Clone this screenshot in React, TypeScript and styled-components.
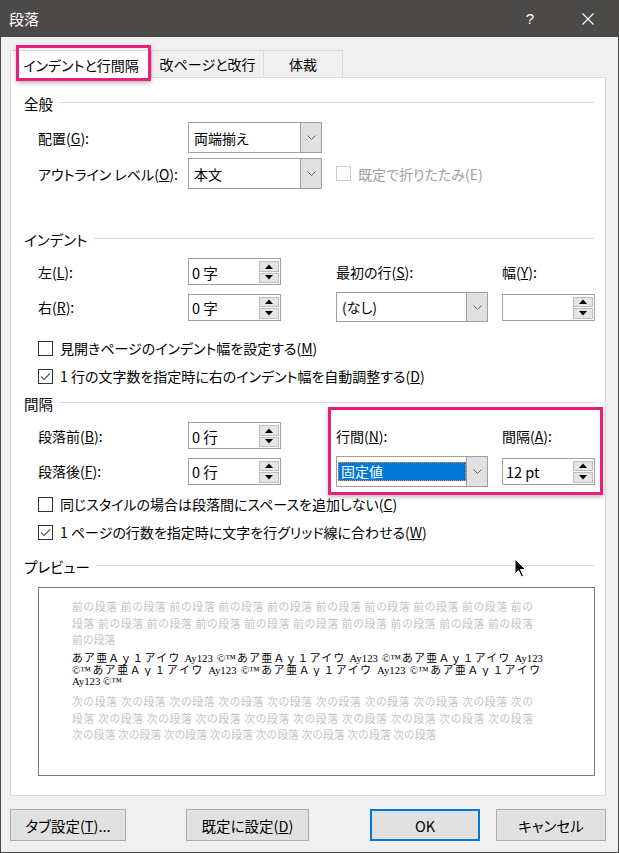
import React from "react";
import styled, { createGlobalStyle } from "styled-components";

const FONT = `"Noto Sans CJK JP", "Noto Sans", sans-serif`;

const GlobalStyle = createGlobalStyle`
  html, body { margin: 0; padding: 0; background: #f0f0f0; }
  body { font-family: ${FONT}; }
  * { box-sizing: border-box; }
`;

const Window = styled.div`
  position: relative;
  width: 619px;
  height: 853px;
  display: flex;
  flex-direction: column;
  background: #f0f0f0;
  border: 1px solid #4c4a48;
  border-top: none;
  font-family: ${FONT};
  font-feature-settings: "palt";
  font-size: 14px;
  color: #000;
  overflow: hidden;
`;

const TitleBar = styled.div`
  height: 37px;
  flex: none;
  display: flex;
  align-items: center;
  background: #4c4a48;
  color: #fff;
  padding-left: 8px;
  padding-right: 1px;
`;

const TitleText = styled.div`
  flex: 1;
  font-size: 15px;
  line-height: 37px;
`;

const TitleButton = styled.div`
  width: 58px;
  height: 37px;
  display: flex;
  align-items: center;
  justify-content: center;
  font-size: 15px;
  font-family: "Liberation Sans", sans-serif;
  color: #fff;
`;

const Body = styled.div`
  flex: 1;
  display: flex;
  flex-direction: column;
  padding: 13px 12px 0 9px;
`;

const TabStrip = styled.div`
  position: relative;
  display: flex;
  height: 27px;
  flex: none;
`;

const Tab = styled.div<{ $w: number; $active?: boolean }>`
  position: relative;
  z-index: ${(p) => (p.$active ? 1 : 0)};
  width: ${(p) => p.$w}px;
  height: ${(p) => (p.$active ? 28 : 27)}px;
  margin-right: -1px;
  display: flex;
  align-items: center;
  justify-content: center;
  background: ${(p) => (p.$active ? "#fff" : "#f0f0f0")};
  border: 1px solid #d9d9d9;
  border-bottom: none;
  white-space: nowrap;
  font-size: 14px;
`;

const PinkFrame = styled.div<{ $l: number; $t: number; $w: number; $h: number }>`
  position: absolute;
  left: ${(p) => p.$l}px;
  top: ${(p) => p.$t}px;
  width: ${(p) => p.$w}px;
  height: ${(p) => p.$h}px;
  border: 3px solid #ea1f7c;
  box-shadow: 0 2px 4px rgba(0, 0, 0, 0.28);
  z-index: 5;
  pointer-events: none;
`;

const Panel = styled.div`
  flex: none;
  display: flex;
  flex-direction: column;
  background: #fff;
  border: 1px solid #d9d9d9;
  padding: 16px 10px 19px 13px;
`;

const SectionHeader = styled.div<{ $mt?: number }>`
  display: flex;
  align-items: center;
  gap: 6px;
  height: 20px;
  line-height: 20px;
  font-size: 14.5px;
  margin-top: ${(p) => p.$mt ?? 0}px;
  white-space: nowrap;
  &::after {
    content: "";
    flex: 1;
    height: 1px;
    margin-top: -4px;
    background: #dcdcdc;
  }
`;

const FieldRow = styled.div<{ $mt: number }>`
  display: flex;
  align-items: center;
  height: 31px;
  margin-left: 14px;
  margin-top: ${(p) => p.$mt}px;
`;

const Label = styled.div<{ $w?: number }>`
  flex: none;
  width: ${(p) => (p.$w ? `${p.$w}px` : "auto")};
  white-space: nowrap;
`;

const FormGrid = styled.div<{ $mt: number }>`
  position: relative;
  display: grid;
  grid-template-columns: 150px 148px 166px 93px;
  grid-template-rows: 27px 30px;
  row-gap: 7px;
  align-items: center;
  margin-left: 14px;
  margin-top: ${(p) => p.$mt}px;
`;

const Cell = styled.div<{ $col: number; $row: number }>`
  grid-column: ${(p) => p.$col};
  grid-row: ${(p) => p.$row};
  display: flex;
  align-items: center;
  white-space: nowrap;
`;

const SelectBox = styled.div<{ $w: number; $h: number }>`
  flex: none;
  display: flex;
  width: ${(p) => p.$w}px;
  height: ${(p) => p.$h}px;
  border: 1px solid #a0a0a0;
  background: #fff;
`;

const SelectValue = styled.div<{ $focused?: boolean }>`
  flex: 1;
  display: flex;
  align-items: center;
  padding: ${(p) => (p.$focused ? "5px 0 5px 1px" : "0 2px 0 5px")};
  white-space: nowrap;
`;

const SelectHighlight = styled.div`
  flex: 1;
  align-self: stretch;
  display: flex;
  align-items: center;
  padding-left: 3px;
  background: #0078d7;
  color: #fff;
  outline: 1px dotted #ff8728;
  outline-offset: -1px;
`;

const SelectArrow = styled.div`
  flex: none;
  width: 21px;
  display: flex;
  align-items: center;
  justify-content: center;
  background: #e1e1e1;
  border-left: 1px solid #a0a0a0;
`;

const SpinBox = styled.div`
  flex: none;
  display: flex;
  width: 93px;
  height: 27px;
  border: 1px solid #a0a0a0;
  background: #fff;
  padding: 2px 1px 1px 0;
`;

const SpinValue = styled.div`
  flex: 1;
  display: flex;
  align-items: center;
  padding-left: 3px;
  white-space: nowrap;
  font-size: 14.5px;
`;

const SpinButtons = styled.div`
  flex: none;
  width: 20px;
  display: flex;
  flex-direction: column;
  gap: 1px;
`;

const SpinButton = styled.div`
  flex: 1;
  display: flex;
  align-items: center;
  justify-content: center;
  background: #e5e5e5;
  border: 1px solid #bdbdbd;
`;

const CheckRow = styled.div<{ $mt?: number; $ml?: number; $disabled?: boolean }>`
  display: flex;
  align-items: center;
  gap: 7px;
  height: 20px;
  margin-left: ${(p) => p.$ml ?? 14}px;
  margin-top: ${(p) => p.$mt ?? 0}px;
  color: ${(p) => (p.$disabled ? "#a0a0a0" : "#000")};
  white-space: nowrap;
`;

const CheckBox = styled.span<{ $disabled?: boolean }>`
  flex: none;
  width: 15px;
  height: 15px;
  display: flex;
  align-items: center;
  justify-content: center;
  background: #fff;
  border: 1px solid ${(p) => (p.$disabled ? "#cccccc" : "#333333")};
`;

const PreviewBox = styled.div`
  margin: 10px 0 0 14px;
  width: 557px;
  height: 189px;
  background: #fff;
  border: 1px solid #7a7a7a;
  padding: 11px 0 0 33px;
  font-family: "Liberation Serif", "Noto Sans CJK JP", serif;
  font-feature-settings: normal;
  font-size: 10.8px;
`;

const PreviewPara = styled.div<{ $grey?: boolean; $lh: number; $mt?: number }>`
  color: ${(p) => (p.$grey ? "#c4c4c4" : "#000")};
  line-height: ${(p) => p.$lh}px;
  margin-top: ${(p) => p.$mt ?? 0}px;
`;

const PreviewLine = styled.div<{ $w: number; $justify?: boolean }>`
  width: ${(p) => p.$w}px;
  text-align: ${(p) => (p.$justify ? "justify" : "left")};
  text-align-last: ${(p) => (p.$justify ? "justify" : "auto")};
  overflow: hidden;
`;

const ButtonRow = styled.div`
  display: flex;
  height: 32px;
  margin-top: 13px;
  flex: none;
`;

const DialogButton = styled.div<{ $w: number; $ml?: number; $primary?: boolean }>`
  width: ${(p) => p.$w}px;
  margin-left: ${(p) => p.$ml ?? 0}px;
  height: 32px;
  display: flex;
  align-items: center;
  justify-content: center;
  background: #e1e1e1;
  border: ${(p) => (p.$primary ? "2px solid #0078d7" : "1px solid #adadad")};
  white-space: nowrap;
  font-size: 14.5px;
`;

const Cursor = styled.svg`
  position: absolute;
  left: 513px;
  top: 558px;
  z-index: 10;
`;

const Chevron = () => (
  <svg width="9" height="5" viewBox="0 0 9 5">
    <path d="M0.5 0.5 L4.5 4.5 L8.5 0.5" fill="none" stroke="#606060" strokeWidth="1" />
  </svg>
);

const Select = ({ w, h, value, focused }: { w: number; h: number; value: string; focused?: boolean }) => (
  <SelectBox $w={w} $h={h}>
    <SelectValue $focused={focused}>
      {focused ? <SelectHighlight>{value}</SelectHighlight> : value}
    </SelectValue>
    <SelectArrow>
      <Chevron />
    </SelectArrow>
  </SelectBox>
);

const Spin = ({ value }: { value: string }) => (
  <SpinBox>
    <SpinValue>{value}</SpinValue>
    <SpinButtons>
      <SpinButton>
        <svg width="8" height="5" viewBox="0 0 8 5">
          <path d="M0 5 L4 0.5 L8 5 Z" fill="#000" />
        </svg>
      </SpinButton>
      <SpinButton>
        <svg width="8" height="5" viewBox="0 0 8 5">
          <path d="M0 0 L8 0 L4 4.5 Z" fill="#000" />
        </svg>
      </SpinButton>
    </SpinButtons>
  </SpinBox>
);

const Check = ({
  checked,
  disabled,
  mt,
  ml,
  children,
}: {
  checked?: boolean;
  disabled?: boolean;
  mt?: number;
  ml?: number;
  children: React.ReactNode;
}) => (
  <CheckRow $mt={mt} $ml={ml} $disabled={disabled}>
    <CheckBox $disabled={disabled}>
      {checked && (
        <svg width="13" height="13" viewBox="0 0 13 13">
          <path d="M2 6.5 L5 9.5 L11 3.5" fill="none" stroke="#555" strokeWidth="1.1" />
        </svg>
      )}
    </CheckBox>
    <span>{children}</span>
  </CheckRow>
);

const rep = (s: string, n: number) => Array(n).fill(s).join(" ");
const U = "あア亜Ａｙ１アイウ Ay123 ©™";

export default function App() {
  return (
    <>
      <GlobalStyle />
      <Window>
        <TitleBar>
          <TitleText>段落</TitleText>
          <TitleButton>?</TitleButton>
          <TitleButton>
            <svg width="12" height="12" viewBox="0 0 12 12">
              <path d="M0.5 0.5 L11.5 11.5 M11.5 0.5 L0.5 11.5" stroke="#fff" strokeWidth="1.1" />
            </svg>
          </TitleButton>
        </TitleBar>
        <Body>
          <TabStrip>
            <Tab $w={142} $active>
              インデントと行間隔
            </Tab>
            <Tab $w={113}>改ページと改行</Tab>
            <Tab $w={80}>体裁</Tab>
            <PinkFrame $l={6} $t={-5} $w={135} $h={36} />
          </TabStrip>
          <Panel>
            <SectionHeader>全般</SectionHeader>
            <FieldRow $mt={8}>
              <Label $w={150}>
                配置(<u>G</u>):
              </Label>
              <Select w={134} h={31} value="両端揃え" />
            </FieldRow>
            <FieldRow $mt={5}>
              <Label $w={150}>
                アウトライン レベル(<u>O</u>):
              </Label>
              <Select w={134} h={31} value="本文" />
              <Check disabled ml={14}>
                既定で折りたたみ(E)
              </Check>
            </FieldRow>

            <SectionHeader $mt={41}>インデント</SectionHeader>
            <FormGrid $mt={8}>
              <Cell $col={1} $row={1}>
                左(<u>L</u>):
              </Cell>
              <Cell $col={2} $row={1}>
                <Spin value="0 字" />
              </Cell>
              <Cell $col={3} $row={1}>
                最初の行(<u>S</u>):
              </Cell>
              <Cell $col={4} $row={1}>
                幅(<u>Y</u>):
              </Cell>
              <Cell $col={1} $row={2}>
                右(<u>R</u>):
              </Cell>
              <Cell $col={2} $row={2}>
                <Spin value="0 字" />
              </Cell>
              <Cell $col={3} $row={2}>
                <Select w={152} h={30} value="(なし)" />
              </Cell>
              <Cell $col={4} $row={2}>
                <Spin value="" />
              </Cell>
            </FormGrid>
            <Check mt={16}>
              見開きページのインデント幅を設定する(<u>M</u>)
            </Check>
            <Check checked mt={8}>
              1 行の文字数を指定時に右のインデント幅を自動調整する(<u>D</u>)
            </Check>

            <SectionHeader $mt={8}>間隔</SectionHeader>
            <FormGrid $mt={8}>
              <Cell $col={1} $row={1}>
                段落前(<u>B</u>):
              </Cell>
              <Cell $col={2} $row={1}>
                <Spin value="0 行" />
              </Cell>
              <Cell $col={3} $row={1}>
                行間(<u>N</u>):
              </Cell>
              <Cell $col={4} $row={1}>
                間隔(<u>A</u>):
              </Cell>
              <Cell $col={1} $row={2}>
                段落後(<u>F</u>):
              </Cell>
              <Cell $col={2} $row={2}>
                <Spin value="0 行" />
              </Cell>
              <Cell $col={3} $row={2}>
                <Select w={152} h={31} value="固定値" focused />
              </Cell>
              <Cell $col={4} $row={2}>
                <Spin value="12 pt" />
              </Cell>
              <PinkFrame $l={290} $t={-15} $w={275} $h={88} />
            </FormGrid>
            <Check mt={8}>
              同じスタイルの場合は段落間にスペースを追加しない(<u>C</u>)
            </Check>
            <Check checked mt={8}>
              1 ページの行数を指定時に文字を行グリッド線に合わせる(<u>W</u>)
            </Check>

            <SectionHeader $mt={15}>プレビュー</SectionHeader>
            <PreviewBox>
              <PreviewPara $grey $lh={16.5}>
                <PreviewLine $w={461} $justify>
                  {rep("前の段落", 9) + " 前の"}
                </PreviewLine>
                <PreviewLine $w={461} $justify>
                  {"段落 " + rep("前の段落", 9)}
                </PreviewLine>
                <PreviewLine $w={461}>前の段落</PreviewLine>
              </PreviewPara>
              <PreviewPara $lh={11.5} $mt={4.5}>
                <PreviewLine $w={471} $justify>
                  {U + U + "あア亜Ａｙ１アイウ Ay123"}
                </PreviewLine>
                <PreviewLine $w={468} $justify>
                  {"©™" + U + U + "あア亜Ａｙ１アイウ"}
                </PreviewLine>
                <PreviewLine $w={471}>Ay123 ©™</PreviewLine>
              </PreviewPara>
              <PreviewPara $grey $lh={16.5} $mt={6.5}>
                <PreviewLine $w={461} $justify>
                  {rep("次の段落", 9) + " 次の"}
                </PreviewLine>
                <PreviewLine $w={461} $justify>
                  {"段落 " + rep("次の段落", 9)}
                </PreviewLine>
                <PreviewLine $w={461}>{rep("次の段落", 8)}</PreviewLine>
              </PreviewPara>
            </PreviewBox>
          </Panel>
          <ButtonRow>
            <DialogButton $w={116}>
              タブ設定(<u>T</u>)...
            </DialogButton>
            <DialogButton $w={123} $ml={60}>
              既定に設定(<u>D</u>)
            </DialogButton>
            <DialogButton $w={110} $ml={61} $primary>
              OK
            </DialogButton>
            <DialogButton $w={110} $ml={16}>
              キャンセル
            </DialogButton>
          </ButtonRow>
        </Body>
        <Cursor width="13" height="20" viewBox="0 0 13 20">
          <path d="M1 1 L1 16 L4.5 12.5 L7.5 19 L9.5 18 L6.5 11.5 L11.5 11.5 Z" fill="#000" stroke="#fff" strokeWidth="1" />
        </Cursor>
      </Window>
    </>
  );
}
